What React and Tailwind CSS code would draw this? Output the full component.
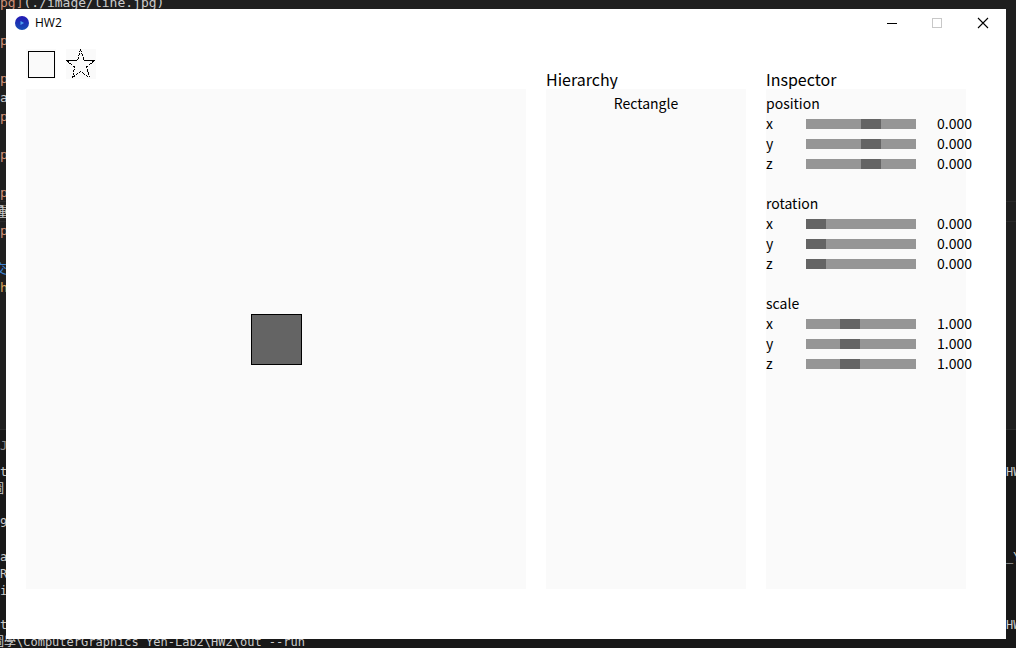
import { useState } from "react";

const editorLines = [
  { text: "pg](./image/line.jpg)", head: 3 },
  { text: "" },
  { text: "p", head: 1 },
  { text: "" },
  { text: "p", head: 1 },
  { text: "a" },
  { text: "p", head: 1 },
  { text: "" },
  { text: "p", head: 1 },
  { text: "" },
  { text: "p", head: 1 },
  { text: "種", active: true, wide: true },
  { text: "p", head: 1 },
  { text: "" },
  { text: "交", tone: "text-[#3b7fd0]", wide: true },
  { text: "h", tone: "text-[#d7a55c]" },
];

const terminalLines = [
  { left: "t", right: "HW2" },
  { left: "圖", wide: true },
  { left: "" },
  { left: "9" },
  { left: "" },
  { left: "a", right: "_Yen" },
  { left: "R" },
  { left: "i" },
  { left: "" },
  { left: "t", right: "HW2" },
  { left: "圖學\\ComputerGraphics_Yen-Lab2\\HW2\\out --run", wide: true },
];

const groups = [
  { name: "position", value: 0, min: -5.5, max: 3.5 },
  { name: "rotation", value: 0, min: 0, max: 6.3 },
  { name: "scale", value: 1, min: 0.15, max: 2.4 },
];

function Desktop() {
  return (
    <div
      aria-hidden="true"
      className="absolute inset-0 flex flex-col overflow-hidden bg-[#1f1f1f] font-['DejaVu_Sans_Mono','Noto_Sans_CJK_TC',monospace] whitespace-pre text-[#cccccc]"
    >
      <div className="-mt-[7px] h-[437px] shrink-0 border-b border-[#2b2b2b] text-[13px] leading-[19px]">
        {editorLines.map((line, i) => (
          <div
            key={i}
            className={
              line.active
                ? "h-[19px] outline outline-[#2a2a2a]"
                : "h-[19px]"
            }
          >
            <span className={line.wide ? "-ml-1.5" : ""}>
              <span className="text-[#ce9178]">{line.text.slice(0, line.head || 0)}</span>
              <span className={line.tone}>{line.text.slice(line.head || 0)}</span>
            </span>
          </div>
        ))}
      </div>
      <div className="flex-1 bg-[#181818] text-[12px] leading-[17px]">
        <div className="h-[34px] pt-2 text-[#8a8a8a]">J</div>
        {terminalLines.map((line, i) => (
          <div key={i} className="flex h-[17px] justify-between">
            <span className={line.wide ? "-ml-2" : ""}>{line.left}</span>
            <span className="w-2.5">{line.right}</span>
          </div>
        ))}
      </div>
    </div>
  );
}

function TitleBar() {
  return (
    <header className="flex h-7 items-center pr-4 pl-2">
      <svg width="16" height="16" viewBox="0 0 16 16" aria-hidden="true">
        <defs>
          <linearGradient id="disc" x1="0" y1="0" x2="0" y2="1">
            <stop offset="0" stopColor="#2418b4" />
            <stop offset="1" stopColor="#1650b4" />
          </linearGradient>
        </defs>
        <circle cx="8" cy="8" r="7" fill="url(#disc)" />
        <path d="M6.5 6v4L10 8z" fill="#4fa3f0" />
      </svg>
      <h1 className="ml-[5px] flex-1 font-['Open_Sans',sans-serif] text-[12px]">HW2</h1>
      <div className="flex gap-[29px]">
        <button type="button" aria-label="Minimize" className="size-4">
          <svg width="16" height="16" viewBox="0 0 16 16" shapeRendering="crispEdges">
            <path d="M3 8.5h10" stroke="#000" />
          </svg>
        </button>
        <button type="button" aria-label="Maximize" disabled className="size-4">
          <svg width="16" height="16" viewBox="0 0 16 16" shapeRendering="crispEdges">
            <path d="M3.5 3.5h9v9h-9z" fill="none" stroke="#c8c8c8" />
          </svg>
        </button>
        <button type="button" aria-label="Close" className="size-4">
          <svg width="16" height="16" viewBox="0 0 16 16">
            <path d="M4 3l10 10M14 3L4 13" stroke="#000" strokeWidth="1.1" />
          </svg>
        </button>
      </div>
    </header>
  );
}

function Tools() {
  return (
    <div className="flex h-10 gap-2.5">
      <button type="button" aria-label="Rectangle tool" className="size-[30px] bg-[#fafafa]">
        <svg width="30" height="30" viewBox="0 0 30 30" shapeRendering="crispEdges">
          <path d="M2.5 2.5h26v26h-26z" fill="none" stroke="#000" />
        </svg>
      </button>
      <button type="button" aria-label="Star tool" className="size-[30px] bg-[#fafafa]">
        <svg
          width="30"
          height="30"
          viewBox="0 0 30 30"
          fill="none"
          stroke="#000"
          shapeRendering="crispEdges"
        >
          <path d="M0 11.5H11M18 11.5H29" />
          <path
            d="M14.5 0.5L11.5 11.5M14.5 0.5L18 11.5M0.5 11.5L8.5 18L6.5 28.5M28.5 11.5L20.5 18L23.5 28.5M6.5 28.5L14.5 22.5L23.5 28.5"
            strokeDasharray="3 1"
          />
        </svg>
      </button>
    </div>
  );
}

function Slider({ group, axis }) {
  const [value, setValue] = useState(group.value);
  const id = `${group.name}-${axis}`;
  return (
    <div className="-mr-1.5 flex h-5 items-center">
      <label htmlFor={id} className="w-10">
        {axis}
      </label>
      <input
        id={id}
        type="range"
        aria-label={`${group.name} ${axis}`}
        min={group.min}
        max={group.max}
        step="0.001"
        value={value}
        onChange={(e) => setValue(Number(e.target.value))}
        className="mt-0.5 h-2.5 w-[110px] appearance-none bg-[#969696] [&::-webkit-slider-thumb]:h-2.5 [&::-webkit-slider-thumb]:w-5 [&::-webkit-slider-thumb]:appearance-none [&::-webkit-slider-thumb]:bg-[#646464]"
      />
      <output htmlFor={id} className="ml-auto">
        {value.toFixed(3)}
      </output>
    </div>
  );
}

export default function App() {
  return (
    <div className="relative min-h-screen overflow-hidden pt-[9px] pr-2.5 pb-[9px] pl-1.5">
      <Desktop />
      <main className="relative bg-white pb-[50px] font-['Noto_Sans_CJK_TC',sans-serif] text-[14px] leading-5 text-black">
        <TitleBar />
        <div className="grid grid-cols-[5fr_2fr_2fr] gap-5 pt-3 pr-10 pl-5">
          <section aria-label="Canvas" className="flex flex-col">
            <Tools />
            <div className="flex aspect-square items-center justify-center bg-[#fafafa] pt-px pl-px">
              <div className="size-[51px] border border-black bg-[#646464]" />
            </div>
          </section>
          <section className="flex flex-col">
            <h2 className="flex h-10 items-end text-[16px] leading-5">Hierarchy</h2>
            <div className="flex-1 bg-[#fafafa] pt-1">
              <button type="button" className="block h-5 w-full text-center">
                Rectangle
              </button>
            </div>
          </section>
          <section className="flex flex-col">
            <h2 className="flex h-10 items-end text-[16px] leading-5">Inspector</h2>
            <div className="flex flex-1 flex-col gap-5 bg-[#fafafa] pt-1">
              {groups.map((group) => (
                <fieldset key={group.name} className="min-w-0">
                  <legend className="h-5">{group.name}</legend>
                  <Slider group={group} axis="x" />
                  <Slider group={group} axis="y" />
                  <Slider group={group} axis="z" />
                </fieldset>
              ))}
            </div>
          </section>
        </div>
      </main>
    </div>
  );
}
